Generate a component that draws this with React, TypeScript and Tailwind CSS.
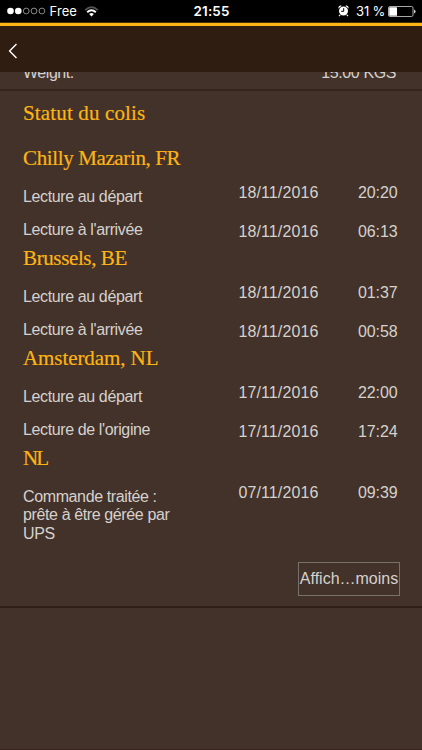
const groups = [
  { place: 'Chilly Mazarin, FR', tracking: 'tracking-[-0.37px]', rows: [['Lecture au départ', '18/11/2016', '20:20'], ["Lecture à l'arrivée", '18/11/2016', '06:13']] },
  { place: 'Brussels, BE', tracking: 'tracking-[-0.38px]', rows: [['Lecture au départ', '18/11/2016', '01:37'], ["Lecture à l'arrivée", '18/11/2016', '00:58']] },
  { place: 'Amsterdam, NL', tracking: 'tracking-[-0.08px]', rows: [['Lecture au départ', '17/11/2016', '22:00'], ["Lecture de l'origine", '17/11/2016', '17:24']] },
  { place: 'NL', tracking: 'tracking-[-1.9px]', rows: [['Commande traitée : prête à être gérée par UPS', '07/11/2016', '09:39']] },
];

const heading = "font-['Liberation_Serif',serif] text-[21px] leading-[27px] text-[#fdb414] [-webkit-text-stroke:0.2px_#fdb414]";

function StatusBar() {
  return (
    <div className="flex h-[22px] shrink-0 items-center bg-black pl-[7px] pr-[6px] font-['Inter',sans-serif] text-[13px] text-white">
      <svg width="39" height="8" viewBox="0 0 39 8" fill="none" stroke="#aaa" strokeWidth="0.8">
        <circle cx="3.5" cy="4" r="3.3" fill="white" stroke="none" />
        <circle cx="11.3" cy="4" r="3.3" fill="white" stroke="none" />
        <circle cx="19.2" cy="4" r="2.9" />
        <circle cx="27" cy="4" r="2.9" />
        <circle cx="34.9" cy="4" r="2.9" />
      </svg>
      <span className="ml-[3.5px] w-[34px] whitespace-nowrap leading-[22px] tracking-[0.1px]">Free</span>
      <svg width="15" height="11" viewBox="0 0 15 11" fill="none" strokeWidth="1.9">
        <path d="M1.2 4.1Q7.5 -2 13.8 4.1" stroke="#555" strokeWidth="1.7" />
        <path d="M3.2 6.2Q7.5 2.1 11.8 6.2" stroke="white" />
        <path d="M5.1 8.1Q7.5 6 9.9 8.1L7.5 10.5Z" fill="white" />
      </svg>
      <span className="ml-[95px] w-[40px] whitespace-nowrap text-[13.4px] font-semibold leading-[22px] tracking-[0.2px]">21:55</span>
      <div className="ml-auto flex items-center">
        <svg width="11" height="12" viewBox="0 0 11 12" fill="none">
          <path d="M.7 3.2Q1 1 3.2.9M7.8.9Q10 1 10.3 3.2M2.2 9.8L1 11M8.8 9.8L10 11" stroke="white" strokeWidth="1.1" />
          <circle cx="5.5" cy="6" r="4.5" fill="white" />
          <path d="M5.7 3.2V6.3H3.2" stroke="black" />
        </svg>
        <span className="ml-[7px] w-[32px] whitespace-nowrap tracking-[-0.15px] leading-[22px]">31 %</span>
        <svg width="28" height="11" viewBox="0 0 28 11">
          <rect x=".5" y=".5" width="24.5" height="10" rx="1.5" fill="none" stroke="#aaa" />
          <rect x="1.2" y="1.2" width="7.8" height="8.6" rx=".6" fill="white" />
          <path d="M26 3.6Q27.6 4 27.6 5.5T26 7.4Z" fill="#ccc" />
        </svg>
      </div>
    </div>
  );
}

export default function App() {
  return (
    <div className="flex h-[750px] w-[422px] flex-col overflow-hidden bg-[#433229] font-['Liberation_Sans',Arial,sans-serif] text-[16px] text-[#d5d1ce]">
      <StatusBar />
      <div className="h-[4px] shrink-0 border-t border-[#46300a] bg-[#fdb414]" />
      <header className="flex h-[46px] shrink-0 items-center bg-[#2f1d12] pl-[8px] pt-[4px]">
        <svg width="10" height="16" viewBox="0 0 10 16" fill="none" stroke="white" strokeWidth="1.4"><path d="M8.5 1L1.6 8L8.5 15" /></svg>
      </header>
      <div className="flex h-[19px] shrink-0 items-end justify-between overflow-hidden border-b-2 border-[#37251b] pb-[6px] pl-[23px] pr-[26px] leading-[20px]">
        <span className="tracking-[-0.45px]">Weight:</span>
        <span className="tracking-[-0.4px]">15.00 KGS</span>
      </div>
      <main className="flex h-[517px] shrink-0 flex-col border-b-2 border-[#301f16] pl-[23px] pr-[23px] pt-[9px]">
        <h1 className={`${heading} mb-[18px] tracking-[0.15px]`}>Statut du colis</h1>
        {groups.map((group) => (
          <section key={group.place}>
            <h2 className={`${heading} ${group.tracking} pb-px`}>{group.place}</h2>
            {group.rows.map(([label, date, time], index) => (
              <div key={label} className={index === 0 ? 'flex h-[38px] items-start' : 'flex h-[34px] items-start'}>
                <span className={`w-[164px] tracking-[-0.38px] ${index === 0 ? 'pt-[14.5px]' : 'pt-[10px]'} leading-[18.5px]`}>{label}</span>
                <span className={`w-[110px] shrink-0 pl-[51.5px] tracking-[0.1px] ${index === 0 ? 'pt-[10px]' : 'pt-[11px]'} leading-[20px]`}>{date}</span>
                <span className={`ml-auto pr-[1.5px] tracking-[-0.1px] ${index === 0 ? 'pt-[10px]' : 'pt-[11px]'} leading-[20px]`}>{time}</span>
              </div>
            ))}
          </section>
        ))}
        <button className="ml-auto mr-[-1px] mt-[51px] flex h-[34px] w-[102px] shrink-0 items-center justify-center whitespace-nowrap border border-[#77706b]">Affich…moins</button>
      </main>
      <div className="mt-auto h-px shrink-0 bg-[#38201b]" />
    </div>
  );
}
